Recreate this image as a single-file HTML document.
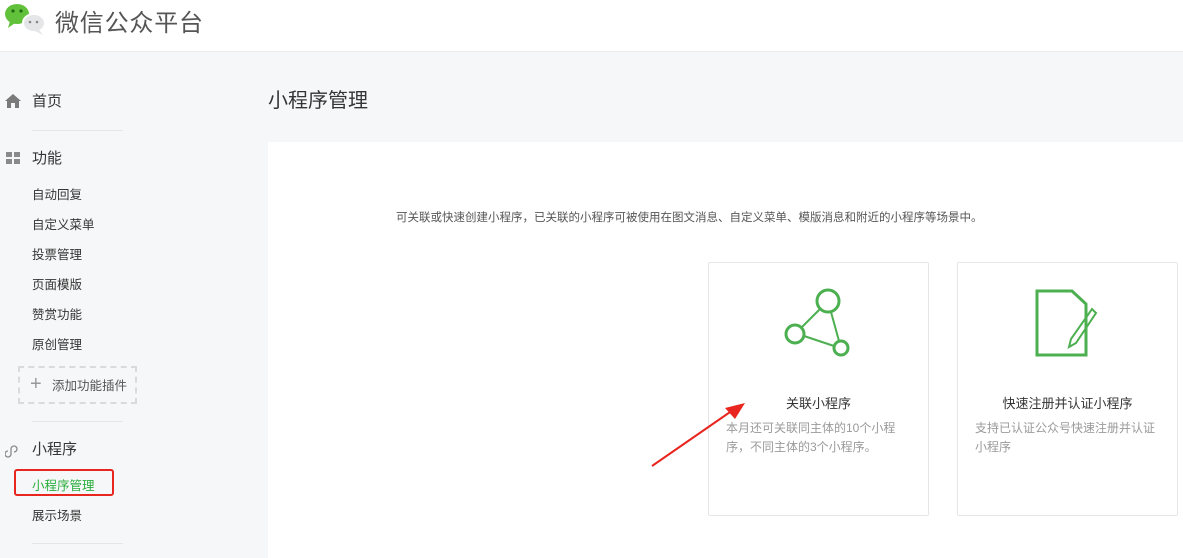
<!DOCTYPE html>
<html><head><meta charset="utf-8"><style>
*{margin:0;padding:0;box-sizing:border-box}
body{width:1183px;height:558px;overflow:hidden;background:#f6f7f8;font-family:"Liberation Sans","Noto Sans CJK SC",sans-serif;color:#353535;position:relative}
.hd{position:absolute;left:0;top:0;width:1183px;height:52px;background:#fff;border-bottom:1px solid #eceded}
.logo{position:absolute;left:55px;top:3px;font-size:24px;color:#555;letter-spacing:0.8px}
.a{position:absolute;white-space:nowrap}
.nav1{font-size:15px;color:#353535}
.sub{font-size:12.5px;color:#353535;left:32px}
.line{position:absolute;left:32px;width:91px;height:1px;background:#e4e6e8}
.main{position:absolute;left:268px;top:142px;width:915px;height:416px;background:#fff}
.card{position:absolute;top:262px;width:221px;height:254px;background:#fff;border:1px solid #e4e6e8;border-radius:2px}
.ct{position:absolute;width:100%;text-align:center;top:130px;font-size:13px;color:#353535}
.cd{position:absolute;left:17px;right:14px;top:156px;font-size:12px;line-height:19px;color:#9a9a9a}
</style></head><body>
<div class="hd">
<svg style="position:absolute;left:3px;top:1px" width="44" height="36" viewBox="0 0 44 36">
<ellipse cx="14" cy="13" rx="12" ry="10" fill="#62c13b"/><path d="M7 20 L5 27 L12 22Z" fill="#62c13b"/>
<circle cx="10" cy="10" r="1.6" fill="#1e6b10"/><circle cx="18" cy="10" r="1.6" fill="#1e6b10"/>
<ellipse cx="31" cy="22" rx="11" ry="9" fill="#e5e6e8" stroke="#fff" stroke-width="2"/><path d="M36 29 L40 34 L32 30Z" fill="#e5e6e8"/>
<circle cx="27" cy="21" r="1.3" fill="#888"/><circle cx="34" cy="21" r="1.3" fill="#888"/>
</svg>
<div class="logo">微信公众平台</div>
</div>
<svg class="a" style="left:5px;top:94px" width="16" height="14" viewBox="0 0 16 14"><path d="M8 0 L16 7 H14 V14 H10 V9 H6 V14 H2 V7 H0Z" fill="#7a7a7a"/></svg>
<div class="a nav1" style="left:32px;top:90px">首页</div>
<div class="line" style="top:130px"></div>
<svg class="a" style="left:6px;top:152px" width="14" height="13"><rect x="0" y="0" width="6" height="5" fill="#8a8a8a"/><rect x="8" y="0" width="6" height="5" fill="#8a8a8a"/><rect x="0" y="7" width="6" height="5" fill="#8a8a8a"/><rect x="8" y="7" width="6" height="5" fill="#8a8a8a"/></svg>
<div class="a nav1" style="left:32px;top:147px">功能</div>
<div class="a sub" style="top:184px">自动回复</div>
<div class="a sub" style="top:214px">自定义菜单</div>
<div class="a sub" style="top:244px">投票管理</div>
<div class="a sub" style="top:274px">页面模版</div>
<div class="a sub" style="top:304px">赞赏功能</div>
<div class="a sub" style="top:334px">原创管理</div>
<div class="a" style="left:18px;top:366px;width:119px;height:38px;border:2px dashed #d9dadc"></div>
<div class="a" style="left:30px;top:372px;font-size:20px;color:#999;font-weight:300;line-height:24px">+</div>
<div class="a" style="left:52px;top:375px;font-size:12.5px;color:#555">添加功能插件</div>
<div class="line" style="top:421px"></div>
<svg class="a" style="left:5px;top:442px" width="16" height="16" viewBox="0 0 16 16" fill="none" stroke="#8a8a8a" stroke-width="1.3"><path d="M6 7 V12 A3 3 0 1 1 3 9"/><path d="M6 7 A3 3 0 1 1 9 10"/></svg>
<div class="a nav1" style="left:32px;top:438px">小程序</div>
<div class="a" style="left:14px;top:469px;width:100px;height:27px;border:2px solid #e8261f;border-radius:3px"></div>
<div class="a sub" style="top:475px;color:#2aae3b">小程序管理</div>
<div class="a sub" style="top:505px">展示场景</div>
<div class="line" style="top:543px"></div>
<div class="a" style="left:268px;top:84px;font-size:20px;color:#353535">小程序管理</div>
<div class="main"></div>
<div class="a" style="left:396px;top:209px;font-size:11.5px;color:#555">可关联或快速创建小程序，已关联的小程序可被使用在图文消息、自定义菜单、模版消息和附近的小程序等场景中。</div>
<div class="card" style="left:708px">
<svg style="position:absolute;left:74px;top:24px" width="72" height="72" viewBox="0 0 72 72" fill="none" stroke="#4caf50" stroke-width="3">
<circle cx="45" cy="14" r="11"/><circle cx="12" cy="47" r="9"/><circle cx="58" cy="61" r="7"/>
<path d="M37 22 L19 40 M21 49 L51 59 M48 25 L56 54" stroke-width="2"/></svg>
<div class="ct">关联小程序</div>
<div class="cd">本月还可关联同主体的10个小程序，不同主体的3个小程序。</div>
</div>
<div class="card" style="left:957px">
<svg style="position:absolute;left:76px;top:26px" width="64" height="70" viewBox="0 0 64 70" fill="none" stroke="#4caf50" stroke-width="3">
<path d="M3 2 H38 L52 15 V66 H3Z"/><path d="M58 20 L62 24 L42 54 L35 58 L37 50Z" stroke-width="2"/></svg>
<div class="ct">快速注册并认证小程序</div>
<div class="cd">支持已认证公众号快速注册并认证小程序</div>
</div>
<svg class="a" style="left:645px;top:398px" width="105" height="72" viewBox="0 0 105 72"><path d="M7 68 L88 12" stroke="#e8261f" stroke-width="2"/><path d="M100 5 L80 10 L90 21Z" fill="#e8261f"/></svg>
</body></html>
